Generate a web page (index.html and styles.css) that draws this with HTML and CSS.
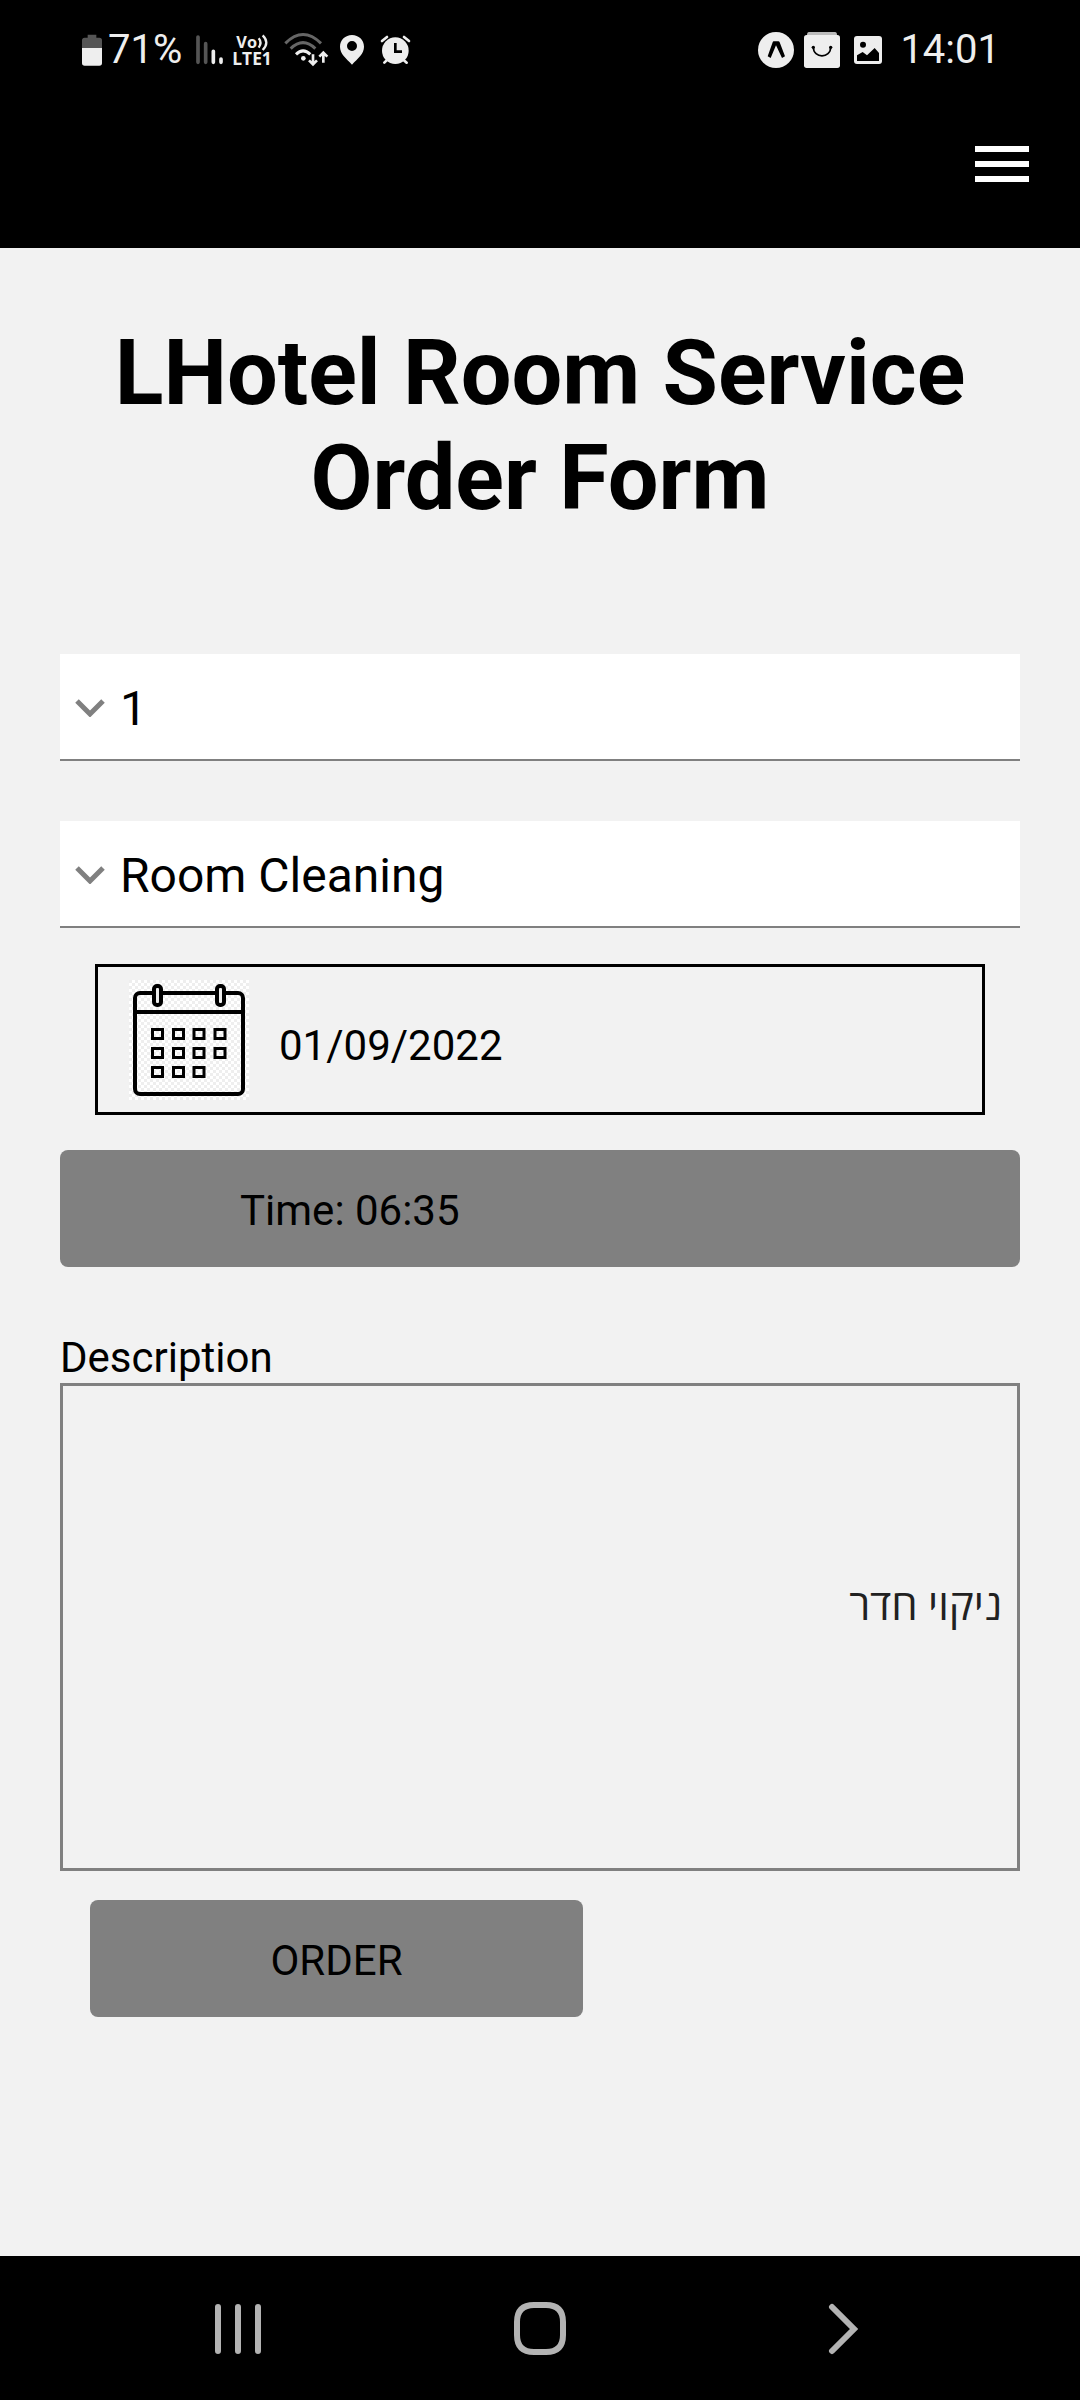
FILE: index.html
```html
<!DOCTYPE html>
<html lang="en">
<head>
<meta charset="utf-8">
<meta name="viewport" content="width=device-width, initial-scale=1">
<title>LHotel Room Service</title>
<link rel="stylesheet" href="styles.css">
</head>
<body>
<header class="top">
  <div class="status">
    <div class="status-group">
      <svg class="status-icon" width="24" height="60" viewBox="60 0 72 180" aria-hidden="true">
        <path fill="#555" d="M83 44h26v9h9q8 0 8 8v24H66V61q0-8 8-8h9z"/>
        <path fill="#eee" d="M66 84h60v45q0 8-8 8H74q-8 0-8-8z"/>
      </svg>
      <span class="battery">71%</span>
      <svg class="status-icon" width="36" height="60" viewBox="396 0 108 180" fill="none" stroke-width="11" stroke-linecap="round" aria-hidden="true">
        <path stroke="#555" d="M414 51v76M437 71v56"/>
        <path stroke="#eee" d="M460 94v33M483 117v10"/>
      </svg>
      <svg class="status-icon" width="48" height="60" viewBox="504 0 144 180" aria-hidden="true">
        <g class="volte"><text x="529" y="83" font-size="49">Vo</text><text x="517" y="135" font-size="52">LTE1</text></g>
        <path fill="none" stroke="#eee" stroke-width="7" d="M596 55q11 13 0 28M608 46q22 21 0 44"/>
      </svg>
      <svg class="status-icon" width="56" height="60" viewBox="648 0 168 180" fill="none" stroke-width="9" aria-hidden="true">
        <path stroke="#666" d="M676 70q53-53 107 0M692 86q37-36 74 0"/>
        <path stroke="#eee" d="M708 103q21-21 43 0"/>
        <circle cx="730" cy="115" r="7" fill="#eee"/>
        <path stroke="#eee" stroke-width="8" d="M759 103v30M747 121l12 12 12-12M790 128V98M778 110l12-12 12 12"/>
      </svg>
      <svg class="status-icon" width="40" height="60" viewBox="816 0 120 180" aria-hidden="true">
        <path fill="#eee" fill-rule="evenodd" d="M876 45c-20 0-36 15-36 35 0 22 18 34 36 54 18-20 36-32 36-54 0-20-16-35-36-35zm0 18a15 15 0 1 1 0 30 15 15 0 0 1 0-30z"/>
      </svg>
      <svg class="status-icon" width="40" height="60" viewBox="936 0 120 180" fill="none" stroke-linecap="round" aria-hidden="true">
        <circle cx="1006" cy="92" r="40" fill="#eee"/>
        <path stroke="#eee" stroke-width="8" d="M966 63l15-12M1047 63l-15-12M982 119l-9 9M1030 119l10 9"/>
        <path stroke="#000" stroke-width="8" stroke-linecap="butt" d="M1006 69v26h20"/>
      </svg>
    </div>
    <div class="status-group">
      <svg class="status-icon" width="42" height="60" viewBox="48 0 126 180" aria-hidden="true">
        <circle cx="108" cy="90" r="54" fill="#eee"/>
        <path fill="#000" d="M101 64h14q3 0 4 3l16 42-9 5-18-38-16 38-9-5 15-42q1-3 3-3z"/>
      </svg>
      <svg class="status-icon" width="48" height="60" viewBox="174 0 144 180" aria-hidden="true">
        <path fill="#bbb" d="M207 36h78q6 0 6 9h-90q0-9 6-9z"/>
        <rect x="192" y="45" width="108" height="99" rx="8" fill="#eee"/>
        <path fill="none" stroke="#000" stroke-width="5" d="M220 82c0 34 52 34 52 0"/>
        <circle cx="220" cy="82" r="5"/><circle cx="272" cy="82" r="5"/>
      </svg>
      <svg class="status-icon" width="44" height="60" viewBox="318 0 132 180" aria-hidden="true">
        <rect x="342" y="48" width="84" height="84" rx="9" fill="#eee"/>
        <circle cx="369" cy="74" r="9"/>
        <path d="M351 123v-17l17-10 13 10 23-22 13 15v24z"/>
      </svg>
      <span class="clock">14:01</span>
    </div>
  </div>
  <div class="bar">
    <button class="menu" type="button" aria-label="Menu">
      <svg width="54" height="36" viewBox="0 0 54 36" fill="#fff"><path d="M0 0h54v6H0zM0 15h54v6H0zM0 30h54v6H0z"/></svg>
    </button>
  </div>
</header>

<main class="page">
  <h1 class="title">LHotel Room Service Order Form</h1>
  <form class="form">
    <div class="picker">
      <select class="picker-input" aria-label="Room number"><option>1</option></select>
      <svg class="picker-arrow" width="30" height="18" viewBox="0 0 30 18"><path d="M2 2l13 13L28 2" fill="none" stroke="#808080" stroke-width="5"/></svg>
    </div>
    <div class="picker">
      <select class="picker-input" aria-label="Service"><option>Room Cleaning</option></select>
      <svg class="picker-arrow" width="30" height="18" viewBox="0 0 30 18"><path d="M2 2l13 13L28 2" fill="none" stroke="#808080" stroke-width="5"/></svg>
    </div>
    <label class="date">
      <svg class="calendar" width="120" height="120" viewBox="0 0 120 120" role="img" aria-label="Date">
        <defs>
          <pattern id="checks" width="6" height="6" patternUnits="userSpaceOnUse"><path fill="#fff" d="M0 0h6v6H0z"/><path fill="#eee" d="M0 0h3v3H0zM3 3h3v3H3z"/></pattern>
        </defs>
        <rect width="120" height="120" fill="url(#checks)"/>
        <g fill="none" stroke="#000">
          <rect x="6" y="13" width="108" height="101" rx="5" stroke-width="4"/>
          <path stroke-width="4" d="M6 32h108"/>
          <g stroke-width="4" fill="#eee"><rect x="25" y="6" width="7" height="19" rx="3"/><rect x="88" y="6" width="7" height="19" rx="3"/></g>
          <path stroke-width="3" d="M23.500 49.500h10v9h-10zM44.500 49.500h10v9h-10zM65 49.500h10v9H65zM86 49.500h10v9H86zM23.500 68.500h10v9h-10zM44.500 68.500h10v9h-10zM65 68.500h10v9H65zM86 68.500h10v9H86zM23.500 87.500h10v9h-10zM44.500 87.500h10v9h-10zM65 87.500h10v9H65z"/>
        </g>
      </svg>
      <input class="date-input" type="text" value="01/09/2022">
    </label>
    <button class="button time" type="button">Time: 06:35</button>
    <label class="label" for="description">Description</label>
    <textarea class="description" id="description" dir="rtl" lang="he">ניקוי חדר</textarea>
    <button class="button order" type="submit">ORDER</button>
  </form>
</main>

<nav class="nav" aria-label="System">
  <button class="nav-button" type="button" aria-label="Recent apps">
    <svg width="54" height="54" viewBox="0 0 54 54" fill="none" stroke="#b3b3b3" stroke-width="6" stroke-linecap="round"><path d="M7 6v44M27 6v44M47 6v44"/></svg>
  </button>
  <button class="nav-button" type="button" aria-label="Home">
    <svg width="54" height="54" viewBox="0 0 54 54" fill="none" stroke="#b3b3b3" stroke-width="6"><path d="M21 4h12q17 0 17 17v13q0 17-17 17H21Q4 51 4 34V21Q4 4 21 4z"/></svg>
  </button>
  <button class="nav-button" type="button" aria-label="Back">
    <svg width="54" height="54" viewBox="0 0 54 54" fill="none" stroke="#b3b3b3" stroke-width="6" stroke-linecap="round"><path d="M17 6l22 22-22 22"/></svg>
  </button>
</nav>
</body>
</html>
```
FILE: styles.css
```css
* {
  box-sizing: border-box;
}

body {
  margin: 0;
  min-height: 100vh;
  display: flex;
  flex-direction: column;
  background: #f2f2f2;
  color: #000;
  font-family: Roboto, "Open Sans", sans-serif;
  font-size: 42px;
  line-height: 49px;
}

button,
input,
select,
textarea {
  margin: 0;
  padding: 0;
  border: 0;
  border-radius: 0;
  background: none;
  color: inherit;
  font: inherit;
}

svg {
  display: block;
  flex: none;
}

.top {
  background: #000;
}

.status {
  display: flex;
  justify-content: space-between;
  padding: 20px 80px 0;
  color: #eee;
  font-size: 40px;
  line-height: 60px;
}

.status-group {
  display: flex;
}

.battery {
  width: 88px;
  padding-left: 4px;
}

.clock {
  padding-left: 10px;
}

.volte {
  fill: #eee;
  font-family: "Open Sans", sans-serif;
  font-weight: 700;
}

.bar {
  display: flex;
  align-items: center;
  justify-content: flex-end;
  height: 168px;
  padding: 0 51px;
}

.page {
  flex: 1;
  padding: 73px 60px;
}

.title {
  margin: 0 0 123px;
  font-size: 90px;
  line-height: 105px;
  font-weight: 700;
  text-align: center;
}

.form {
  display: flex;
  flex-direction: column;
}

.picker {
  position: relative;
  margin-bottom: 60px;
}

.picker + .picker {
  margin-bottom: 36px;
}

.picker-input {
  display: block;
  width: 100%;
  height: 107px;
  padding: 4px 20px 0 60px;
  appearance: none;
  background: #fff;
  border-bottom: 2px solid #808080;
  font-size: 48px;
  line-height: 60px;
}

.picker-arrow {
  position: absolute;
  left: 15px;
  top: 45px;
  pointer-events: none;
}

.date {
  display: flex;
  align-items: center;
  gap: 30px;
  height: 151px;
  margin: 0 35px 35px;
  padding: 0 31px;
  border: 3px solid #000;
}

.date-input {
  flex: 1;
  min-width: 0;
  padding-top: 12px;
}

.button {
  height: 117px;
  padding-top: 3px;
  border-radius: 8px;
  background: #808080;
}

.time {
  margin-bottom: 66px;
  padding-left: 180px;
  text-align: left;
}

.description {
  height: 488px;
  margin-top: 1px;
  margin-bottom: 29px;
  padding: 195px 15px 0;
  border: 3px solid #808080;
  color: #212121;
  resize: none;
}

.order {
  width: 493px;
  margin-left: 30px;
}

.nav {
  display: flex;
  align-items: center;
  justify-content: space-around;
  height: 144px;
  padding: 0 87px;
  background: #000;
}
```
